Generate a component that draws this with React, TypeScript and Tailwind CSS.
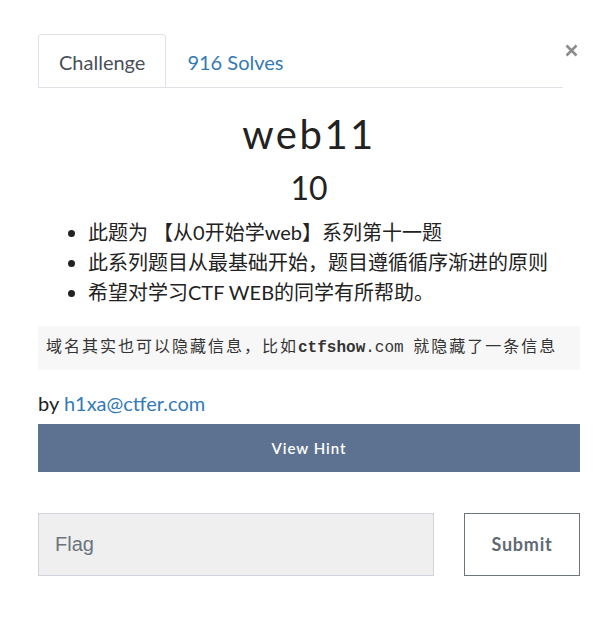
import React from "react";

const bullets = [
  "此题为 【从0开始学web】系列第十一题",
  "此系列题目从最基础开始，题目遵循循序渐进的原则",
  "希望对学习CTF WEB的同学有所帮助。",
];

const cjk = "tracking-[2px]";

const App = () => {
  return (
    <div
      className="w-[612px] h-[620px] bg-white pl-[38px] pr-[32px] pt-[34px] text-[#212529]"
      style={{ fontFamily: "Lato, 'Noto Sans CJK SC', sans-serif" }}
    >
      {/* Tabs + close */}
      <div className="flex items-start">
        <ul className="flex flex-1 border-b border-[#dee2e6]">
          <li className="-mb-px h-[53px] px-[20px] pt-[2px] flex items-center border border-[#dee2e6] border-b-white rounded-t-[4px] bg-white text-[20px] text-[#495057]">
            Challenge
          </li>
          <li className="h-[53px] px-[21px] pt-[2px] flex items-center text-[20px] text-[#337ab7]">
            916 Solves
          </li>
        </ul>
        <button className="w-[17px] h-[32px] flex items-center justify-center" aria-label="Close">
          <svg width="13" height="13" viewBox="0 0 13 13" className="text-[#8c8c8c]">
            <path d="M1.5 1.5L11.5 11.5M11.5 1.5L1.5 11.5" stroke="currentColor" strokeWidth="2.6" />
          </svg>
        </button>
      </div>

      <h2 className="mt-[22px] text-center text-[40px] leading-[48px] tracking-[2.5px] text-[#222]">
        web11
      </h2>
      <h3 className="mt-[10px] text-center text-[32px] leading-[40px] text-[#222]">10</h3>

      <ul className="mt-[9px] pl-[50px] list-disc text-[20px] leading-[30px] text-[#222]">
        {bullets.map((b) => (
          <li key={b}>{b}</li>
        ))}
      </ul>

      <pre
        className="mt-[19px] h-[44px] bg-[#f7f7f7] px-[8px] flex items-center text-[16px] text-[#333]"
        style={{ fontFamily: "'Liberation Mono', 'Noto Sans CJK SC', monospace" }}
      >
        <span className={cjk}>域名其实也可以隐藏信息，比如</span>
        <b>ctfshow</b>.com <span className={cjk}>就隐藏了一条信息</span>
      </pre>

      <p className="mt-[20px] text-[20px] leading-[26px] text-[#222]">
        by <a className="text-[#337ab7]">h1xa@ctfer.com</a>
      </p>

      <button className="mt-[8px] w-full h-[48px] bg-[#5c7290] text-white text-[15px] font-semibold tracking-[1px]">
        View Hint
      </button>

      <div className="mt-[41px] flex gap-[30px]">
        <input
          placeholder="Flag"
          className="w-[396px] h-[63px] bg-[#efefef] border border-[#cfd5db] px-[16px] text-[20px] placeholder:text-[#6c757d] outline-none"
          style={{ fontFamily: "'Liberation Sans', Arial, sans-serif" }}
        />
        <button className="flex-1 h-[63px] border border-[#6c757d] text-[18px] font-bold tracking-[0.8px] text-[#5f6a74] bg-white">
          Submit
        </button>
      </div>
    </div>
  );
};

export default App;
